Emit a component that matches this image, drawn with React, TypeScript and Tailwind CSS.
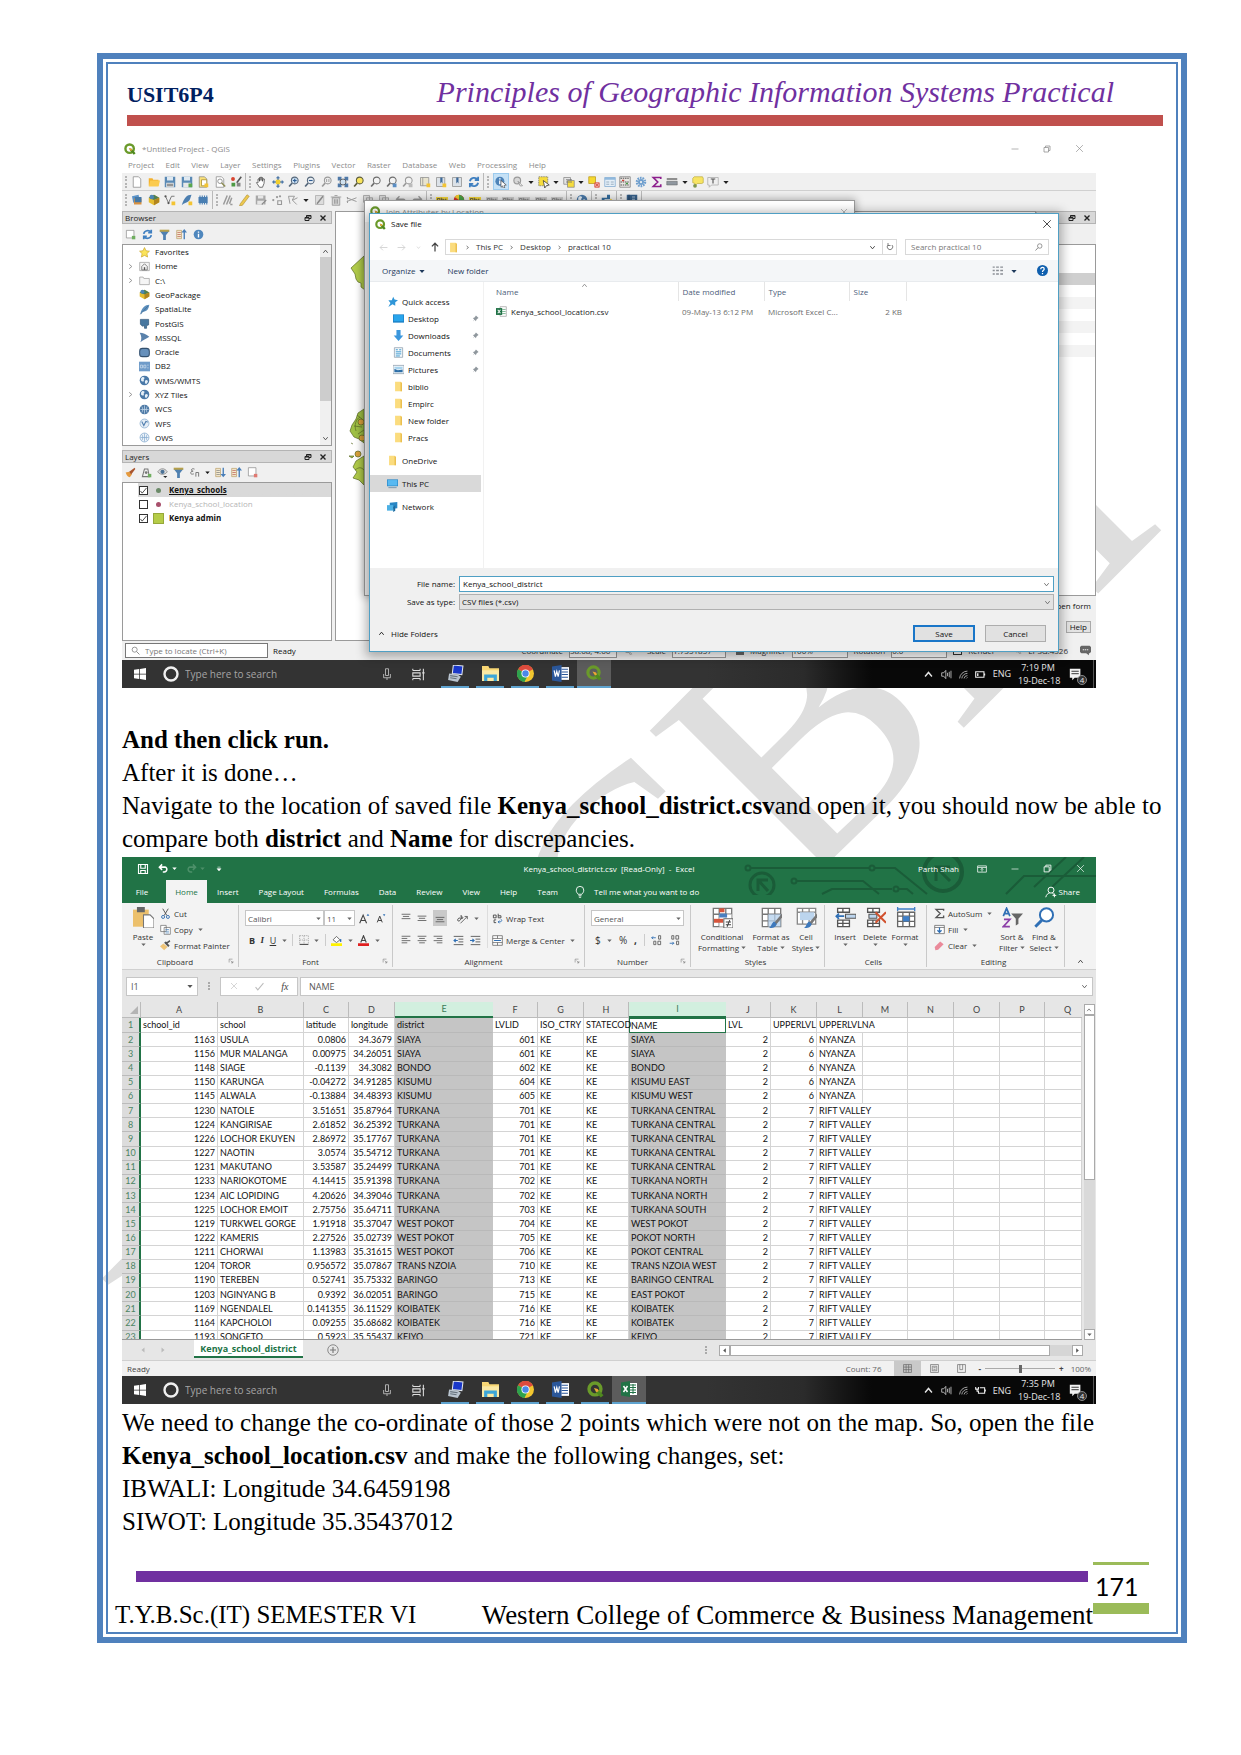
import React from "react";

/* ---------- icon set, all drawn on a 16 x 16 field ---------- */

const folder = (
  <>
    <path d="M3 1h8l2 2v12H3z" fill="#fbdc7e" />
    <path d="M11 1l2 2v12h-2z" fill="#e9bd4d" />
  </>
);
const lens = (stroke: string, fill: string) => (
  <>
    <circle cx="9" cy="6" r="4.5" fill={fill} stroke={stroke} strokeWidth="1.4" />
    <path d="M5.5 9.5L1.5 14" stroke={stroke} strokeWidth="2.2" />
  </>
);
const globe = (c: string) => (
  <>
    <circle cx="8" cy="8" r="7" fill={c} />
    <path d="M3 5c2-3 4-2 5-1s-2 2-1 4-3 2-4 0zM9 8c2-2 4 0 4 1s-2 4-3 4-2-3-1-5z" fill="#e6f0f8" />
  </>
);
const page = (c: string) => <path d="M3 1h7l3 3v11H3z" fill={c} stroke="#8a8a8a" />;
const dot = (x: number, y: number, c: string) => <rect x={x} y={y} width="5" height="5" fill={c} />;
const tbl = (accent: string) => (
  <>
    <path d="M1 1h14v14H1z" fill="#fff" stroke="#777" />
    <path d="M1 5.5h14M1 10.5h14M5.5 1v14M10.5 1v14" stroke="#777" />
    <path d="M5.5 5.5h9.5V15H5.5z" fill={accent} fillOpacity=".75" />
  </>
);
const lines = (rows: string, c = "#555") => <path d={rows} stroke={c} strokeWidth="1.3" fill="none" />;

const ICONS: Record<string, React.ReactNode> = {
  qgis: (
    <>
      <circle cx="7.5" cy="7.5" r="5.6" fill="none" stroke="#6a9a2a" strokeWidth="3.2" />
      <path d="M7 7l3 .5 5.5 6-2.5 2-5-5.5z" fill="#4f8a1e" />
      <path d="M6.5 6.5l3.5 1 1 2-2 1z" fill="#f0a33a" />
    </>
  ),
  new: page("#fff"),
  open: (
    <>
      <path d="M1 3h5l1 2h7v8H1z" fill="#f3b12e" />
      <path d="M3 6h13l-2 8H1z" fill="#fbcb4f" />
    </>
  ),
  save: (
    <>
      <path d="M1 1h14v14H1z" fill="#5b8ab5" />
      <path d="M4 1h8v5H4z" fill="#dfe9f1" />
      <path d="M3 9h10v6H3z" fill="#e8e8e8" />
      <path d="M4 11h8M4 13h8" stroke="#555" />
    </>
  ),
  saveas: (
    <>
      <path d="M1 1h14v14H1z" fill="#5b8ab5" />
      <path d="M4 1h8v5H4z" fill="#dfe9f1" />
      <path d="M3 9h10v6H3z" fill="#e8e8e8" />
      {dot(10, 10, "#5aa84e")}
    </>
  ),
  layout: (
    <>
      {page("#fbe27a")}
      <path d="M6 5h7v8H6z" fill="#fff" stroke="#a58a22" />
      {dot(10, 10, "#f3c433")}
    </>
  ),
  layoutmgr: (
    <>
      {page("#fff")}
      <circle cx="8" cy="7" r="3" fill="none" stroke="#777" />
      <path d="M10 9l5 5" stroke="#8d8d55" strokeWidth="2" />
    </>
  ),
  style: (
    <>
      <circle cx="4" cy="4" r="2.6" fill="#d8442f" />
      <path d="M2 9h5v5H2z" fill="#4e9a45" />
      <path d="M15 1L9 9" stroke="#555" strokeWidth="2" />
      <path d="M9 9h5v5H9z" fill="#888" />
    </>
  ),
  hand: (
    <path d="M4 9V4l1.500-.5L6 7V2l1.600-.4L8 6l.5-4.500L10 2v5l1-3.500 1.500.5L12 10l-2 5H6L2 9l1-1z" fill="#fff" stroke="#333" strokeWidth=".9" />
  ),
  panlayer: (
    <>
      <path d="M8 0l3 3H9v4h4V5l3 3-3 3V9H9v4h2l-3 3-3-3h2V9H3v2L0 8l3-3v2h4V3H5z" fill="#4f79a8" />
      <path d="M5 5h6v6H5z" fill="#f2cf2e" />
    </>
  ),
  zoomin: (
    <>
      {lens("#56687b", "#c9def0")}
      <path d="M9 3.500v5M6.500 6h5" stroke="#2d5c92" strokeWidth="1.5" />
    </>
  ),
  zoomout: (
    <>
      {lens("#56687b", "#e9eef3")}
      <path d="M6.500 6h5" stroke="#2d5c92" strokeWidth="1.5" />
    </>
  ),
  zoom11: (
    <>
      {lens("#9a9a9a", "#eee")}
      <path d="M7.500 4v4M10.500 4v4" stroke="#888" />
    </>
  ),
  zoomfull: (
    <>
      <path d="M1 1h5v5H1zM10 1h5v5h-5zM1 10h5v5H1zM10 10h5v5h-5z" fill="#4f79a8" />
      <circle cx="8" cy="8" r="4" fill="#cfe0ee" stroke="#444" />
    </>
  ),
  zoomsel: lens("#5d5d3d", "#f8e35c"),
  zoomlayer: lens("#6d6d6d", "#f3f3f3"),
  zoomlast: (
    <>
      {lens("#6d6d6d", "#f3f3f3")}
      {dot(9, 10, "#5b8ec4")}
    </>
  ),
  zoomnext: (
    <>
      {lens("#9a9a9a", "#f3f3f3")}
      {dot(9, 10, "#bbb")}
    </>
  ),
  mapview: (
    <>
      <path d="M2 2h11v11H2z" fill="#e8e4d0" stroke="#8d8d8d" />
      <path d="M5 2v11" stroke="#8d8d8d" />
      {dot(10, 10, "#f3c433")}
    </>
  ),
  bookmarknew: (
    <>
      <path d="M2 2h11v12H2z" fill="#dce2e8" stroke="#8d8d8d" />
      <path d="M7 2h3v8L8.500 8 7 10z" fill="#3e6a99" />
      {dot(10, 10, "#f3c433")}
    </>
  ),
  bookmark: (
    <>
      <path d="M2 2h12v12H2z" fill="#dce2e8" stroke="#8d8d8d" />
      <path d="M7 2h3v8L8.500 8 7 10z" fill="#3e6a99" />
    </>
  ),
  refresh: (
    <path d="M2.500 7A5.800 5.800 0 0 1 13 5M13.500 9A5.800 5.800 0 0 1 3 11M13.500 1v4.500H9M2.500 15v-4.500H7" fill="none" stroke="#3f7fc0" strokeWidth="2.4" />
  ),
  identify: (
    <>
      <circle cx="6.5" cy="7" r="6" fill="#4d83b8" />
      <path d="M6.500 3v1.500M6.500 6v5" stroke="#fff" strokeWidth="2" />
      <path d="M8 6l7 6-3 .5L13 16l-2 .2-1-3-2 1.800z" fill="#fff" stroke="#333" strokeWidth=".8" />
    </>
  ),
  gear: (
    <>
      <circle cx="7" cy="6" r="4.5" fill="#d7d7d7" stroke="#999" strokeWidth="1.5" />
      <path d="M8 7l6 6-3 .3z" fill="#fff" stroke="#888" />
    </>
  ),
  select: (
    <>
      <path d="M1 1h12v12H1z" fill="#f6dc3d" stroke="#777" strokeDasharray="2 1" />
      <path d="M7 6l8 6-4 1-2 3z" fill="#fff" stroke="#333" />
    </>
  ),
  selform: (
    <>
      <path d="M1 2h9v9H1z" fill="#e5e5e5" stroke="#888" />
      <path d="M6 6h9v9H6z" fill="#f6dc3d" stroke="#888" />
      <path d="M4 5h8M4 8h8" stroke="#666" />
    </>
  ),
  desel: (
    <>
      <path d="M1 1h9v9H1z" fill="#f6d92f" stroke="#b99a1c" />
      <path d="M9 9h6v6H9z" fill="#f0b0a8" stroke="#d6453b" />
      <path d="M10 10l4 4M14 10l-4 4" stroke="#d6453b" />
    </>
  ),
  attr: (
    <>
      <path d="M1 2h14v12H1z" fill="#e5eff8" stroke="#7fa8cf" />
      <path d="M1 2h14v3H1z" fill="#8fb8dd" />
      <path d="M3 8h4M9 8h4M3 11h4M9 11h4" stroke="#8199ad" />
    </>
  ),
  calc: (
    <>
      <path d="M1 1h14v14H1z" fill="#e8e6e2" stroke="#7b7b7b" />
      <path d="M2 3h12M2 8h12M2 12h12" stroke="#555" strokeDasharray="2 1" strokeWidth="1.5" />
      <path d="M4 5h3v2H4z" fill="#cc4038" />
      <path d="M9 9h3v2H9z" fill="#499a45" />
    </>
  ),
  cog: (
    <>
      <circle cx="8" cy="8" r="5.5" fill="none" stroke="#6f9fce" strokeWidth="3" strokeDasharray="2.2 1.2" />
      <circle cx="8" cy="8" r="4" fill="#6f9fce" />
      <circle cx="8" cy="8" r="1.5" fill="#f0f0f0" />
    </>
  ),
  sigma: <path d="M13 4V2H3l6 6-6 6h10v-3" fill="none" stroke="#8d1f8d" strokeWidth="2.2" />,
  measure: (
    <>
      <path d="M1 4h14" stroke="#444" strokeWidth="1.5" />
      <path d="M1 7h14v5H1z" fill="#8f979f" stroke="#555" strokeWidth=".6" />
    </>
  ),
  tip: (
    <>
      <path d="M3 1h11l1 2v6l-2 1H7l-3 3v-3L1 9V3z" fill="#f7e463" stroke="#b3a130" strokeWidth=".8" />
      <circle cx="4" cy="13" r="2.5" fill="#7d944d" />
    </>
  ),
  annot: (
    <>
      <path d="M1 2h14v10H6l-3 3v-3H1z" fill="#efefef" stroke="#aaa" />
      <path d="M5 4h6M8 4v6" stroke="#555" strokeWidth="1.5" />
    </>
  ),
  dsm: (
    <>
      <path d="M2 2h9v9H2z" fill="#5b93c9" transform="rotate(-12 6 6)" />
      <path d="M4 6h10v8H4z" fill="#d89142" />
      <path d="M5 4h9v7H5z" fill="#4478a6" />
    </>
  ),
  gpkg: (
    <>
      <path d="M8 1l7 4v6l-7 4-7-4V5z" fill="#e5bd31" />
      <path d="M8 1l7 4-7 3-7-3z" fill="#4e7f56" />
      <path d="M8 8v7l7-4V5z" fill="#b2861f" />
      <circle cx="5" cy="4" r="3" fill="#4d86b5" />
    </>
  ),
  shp: (
    <>
      <path d="M2 3l4 9L10 3h4" fill="none" stroke="#777" strokeWidth="1.3" />
      <circle cx="2" cy="3" r="1.5" fill="#555" />
      <circle cx="6" cy="12" r="1.5" fill="#555" />
      {dot(10, 10, "#f3c433")}
    </>
  ),
  feather: (
    <>
      <path d="M15 1C9 1 4 5 2 14l1 1c1-3 3-4 5-4 4-1 6-4 7-10z" fill="#5c8fbd" />
      <path d="M13 3L2 15" stroke="#32587c" strokeWidth=".8" />
    </>
  ),
  feathernew: (
    <>
      <path d="M14 1C8 1 4 5 1 15c4-4 9-3 11-8z" fill="#4d7fb0" />
      {dot(10, 10, "#f3c433")}
    </>
  ),
  mem: (
    <>
      <path d="M2 4h12v8H2z" fill="#4a7fb3" />
      <path d="M4 2v12M7 2v12M10 2v12M13 2v12" stroke="#4a7fb3" strokeWidth="1.5" />
    </>
  ),
  edits: <path d="M2 14L7 2M6 14L11 2M10 13l3-8M11 14h3" stroke="#9b9b9b" strokeWidth="2" />,
  pencil: <path d="M3 13L12 1l3 2-9 12-4 1z" fill="#edc84e" stroke="#a5842a" strokeWidth=".7" />,
  saveg: (
    <>
      <path d="M1 2h13v12H1z" fill="#a8a8a8" />
      <path d="M4 2h7v4H4zM3 9h9v5H3z" fill="#e6e6e6" />
      <path d="M9 14l6-6" stroke="#888" strokeWidth="1.5" />
    </>
  ),
  pts: (
    <>
      <circle cx="3" cy="8" r="1.5" fill="#999" />
      <circle cx="8" cy="4" r="1.5" fill="#999" />
      <circle cx="12" cy="3" r="1.5" fill="#999" />
      <path d="M9 9h5v5H9z" fill="none" stroke="#999" strokeWidth="1.5" />
    </>
  ),
  vertex: <path d="M2 3h8l-3 5 6 6M2 3l2 10M8 8l6-3" stroke="#9a9a9a" strokeWidth="1.3" fill="none" />,
  modify: (
    <>
      <path d="M2 2h11v12H2z" fill="#ddd" stroke="#aaa" />
      <path d="M4 13L12 3" stroke="#888" strokeWidth="2" />
    </>
  ),
  trash: (
    <>
      <path d="M3 5h10v10H3z" fill="#d5d5d5" stroke="#8f8f8f" />
      <path d="M1 4h14M6 2h4M6 7v6M8 7v6M10 7v6" stroke="#8f8f8f" />
    </>
  ),
  cutg: <path d="M1 5l13 5M1 10l13-5M2 4v3M2 9v3" stroke="#9a9a9a" strokeWidth="1.3" />,
  copyg: <path d="M2 2h8v9H2zM6 5h8v9H6z" fill="#ddd" stroke="#999" />,
  undog: <path d="M6 3L2 7l4 4M2 7h9c3 0 3 5 0 6" fill="none" stroke="#999" strokeWidth="1.8" />,
  redog: <path d="M10 3l4 4-4 4M14 7H5c-3 0-3 5 0 6" fill="none" stroke="#999" strokeWidth="1.8" />,
  abc: (
    <>
      <path d="M0 4h16v7H0z" fill="#f5d73a" />
      <path d="M2 6h3v3H2zM7 5v4h3V7H7M14 7h-2v2h2" fill="none" stroke="#444" />
    </>
  ),
  abcg: (
    <>
      <path d="M0 4h16v7H0z" fill="#ccc" />
      <path d="M2 6h3v3H2zM7 5v4h3V7H7M14 7h-2v2h2" fill="none" stroke="#777" />
    </>
  ),
  diagram: (
    <>
      <circle cx="8" cy="8" r="7" fill="#d7332b" />
      <path d="M8 8V1a7 7 0 0 1 6 10z" fill="#4aa347" />
      <path d="M8 8L2 4a7 7 0 0 1 6-3z" fill="#f2cf2e" />
    </>
  ),
  globe: globe("#4a79a8"),
  globel: (
    <>
      <circle cx="8" cy="8" r="6.5" fill="#eef4fa" stroke="#7fa6cc" />
      <path d="M2 8h12M8 2v12M4 3.500c2 3 2 6 0 9M12 3.500c-2 3-2 6 0 9" stroke="#7fa6cc" fill="none" />
    </>
  ),
  wfs: (
    <>
      <circle cx="8" cy="8" r="6.5" fill="#e4edf6" stroke="#7fa6cc" />
      <path d="M4 5l3 6 3-6 3 1" fill="none" stroke="#4f7eae" strokeWidth="1.5" />
    </>
  ),
  wcs: (
    <>
      <circle cx="8" cy="8" r="7" fill="#4d79a5" />
      <path d="M2 8h12M8 2v12M4 3.500c2 3 2 6 0 9M12 3.500c-2 3-2 6 0 9" stroke="#c9dced" fill="none" />
    </>
  ),
  python: (
    <>
      <path d="M8 1h4v6H5L3 10 1 8V5h7z" fill="#356d9e" />
      <path d="M8 15H4V9h7l2-3 2 2v3H8z" fill="#f3cf3c" />
    </>
  ),
  help: (
    <>
      <path d="M1 1h14v14H1z" fill="#365f88" />
      <path d="M4 1v14" stroke="#1b3a58" />
      <path d="M8 4h4M8 7h4" stroke="#c6d7e7" />
    </>
  ),
  addl: (
    <>
      <path d="M2 2h11v11H2z" fill="#fff" stroke="#888" />
      {dot(10, 10, "#6fae5f")}
    </>
  ),
  filter: (
    <>
      <path d="M1 3h14L10 9v7H6V9z" fill="#4f80b0" />
      <path d="M1 1h14v3H1z" fill="#b7a04a" />
    </>
  ),
  collapse: (
    <>
      <path d="M1 2h7v12H1z" fill="#f4ead0" stroke="#b99e65" />
      <path d="M2 5h5M2 8h5M2 11h5" stroke="#b9564a" />
      <path d="M11 15V5H8l4-5 4 5h-3v10z" fill="#4a7fb8" />
    </>
  ),
  expand: (
    <>
      <path d="M1 2h7v12H1z" fill="#f4ead0" stroke="#b99e65" />
      <path d="M2 5h5M2 8h5M2 11h5" stroke="#777" />
      <path d="M11 1v9H8l4 5 4-5h-3V1z" fill="#4a7fb8" />
    </>
  ),
  info: (
    <>
      <circle cx="8" cy="8" r="7" fill="#4f87bd" />
      <path d="M8 3.500v2M8 7v5.500" stroke="#fff" strokeWidth="2" />
    </>
  ),
  star: <path d="M8 .8l2.200 4.700 5 .6-3.700 3.500 1 5L8 12.200l-4.500 2.400 1-5L.8 6.100l5-.6z" fill="#fbe45b" stroke="#c9a42c" />,
  home: (
    <>
      <path d="M1 2h14v12H1z" fill="#f5f5f5" stroke="#999" />
      <path d="M4 8l4-4 4 4v5H4z" fill="none" stroke="#555" />
      <path d="M7 9h2v4H7z" fill="#555" />
    </>
  ),
  drive: <path d="M1 3h5l1 2h8v9H1z" fill="#f5f5f5" stroke="#999" />,
  postgis: <path d="M2 2h12v8l-3 1v4H8v-4L5 12 2 9z" fill="#47779f" stroke="#2f5678" />,
  mssql: <path d="M1 1c5 0 9 2 14 6-5 3-9 5-13 8 2-5 2-9-1-14z" fill="#5a82ab" />,
  oracle: <rect x="1" y="2" width="14" height="12" rx="4" fill="#6690bb" stroke="#33506e" strokeWidth="1.5" />,
  db2: (
    <>
      <path d="M0 1h16v14H0z" fill="#6f9bc9" />
      <path d="M2 6h3v4H2zM7 6h3v4H7zM12 6h2M12 10h2" stroke="#d5e4f2" fill="none" />
    </>
  ),
  brush: (
    <>
      <path d="M1 8l5-1 4 4-3 4C4 14 2 12 1 8z" fill="#e59a3e" />
      <path d="M6 7L14 1l1 2-6 8z" fill="#a9552e" />
    </>
  ),
  group: (
    <>
      <path d="M2 14L5 3h5l2 11z" fill="none" stroke="#777" strokeWidth="1.5" />
      <circle cx="7.5" cy="8" r="2" fill="#777" />
      {dot(10, 10, "#6fae5f")}
    </>
  ),
  eye: (
    <>
      <path d="M1 7c4-6 10-6 14 0-4 5-10 5-14 0z" fill="#ddd" stroke="#777" />
      <circle cx="8" cy="7" r="3" fill="#4b7297" />
      <path d="M9 13h6l-3 3z" fill="#222" />
    </>
  ),
  eps: <path d="M8 3C3 1 2 6 6 6c-5 0-5 6 1 4M10 8v6M10 8h4v6" fill="none" stroke="#777" strokeWidth="1.4" />,
  rem: (
    <>
      <path d="M2 1h11v12H2z" fill="#fff" stroke="#888" />
      {dot(10, 10, "#e07a72")}
    </>
  ),
  quick: <path d="M9 1l2 4 5 1-4 3v5l-4-2-6 4 3-6-3-4h5z" fill="#2f96d8" />,
  desktop: (
    <>
      <path d="M0 2h16v12H0z" fill="#1b7fc4" />
      <path d="M1 3h14v9H1z" fill="#29a5ec" />
    </>
  ),
  down: <path d="M5 0h6v8h4l-7 8-7-8h4z" fill="#3b97dd" />,
  docs: (
    <>
      <path d="M2 1h12v14H2z" fill="#f4f8fb" stroke="#8295a5" />
      <path d="M4 4h3M4 7h8M4 10h8M9 4h3M4 13h6" stroke="#3c9ad0" strokeWidth="1.4" />
    </>
  ),
  pics: (
    <>
      <path d="M0 2h16v12H0z" fill="#f4f8fb" stroke="#8295a5" />
      <path d="M2 12V7l5 2 7-1v4z" fill="#2d6fa8" />
      <path d="M2 4h12v3L7 8 2 6z" fill="#a7d3ee" />
    </>
  ),
  folder,
  pc: (
    <>
      <path d="M0 2h16v10H0z" fill="#2b88c9" />
      <path d="M1 3h14v8H1z" fill="#58b9f1" />
      <path d="M2 14h12" stroke="#7f9cb1" strokeWidth="1.5" />
    </>
  ),
  network: (
    <>
      <path d="M4 1h11v9H4z" fill="#2786c4" transform="skewY(-6) translate(0 2)" />
      <path d="M0 6h9v8H0z" fill="#4cb0e4" />
      <path d="M9 9l3-3v8l-3 2z" fill="#1c6a9f" />
    </>
  ),
  pin: <path d="M9 1l6 6-2 1-3 3-1 3-3-3-4 4 3-5-3-3 3-1 3-3z" fill="#8f979d" />,
  csv: (
    <>
      <path d="M6 1h9v14H6z" fill="#fff" stroke="#9a9a9a" />
      <path d="M9 5h5M9 8h5M9 11h5" stroke="#4c9b6c" />
      <path d="M0 3h9v10H0z" fill="#1f7145" />
      <path d="M2.500 5.500l4 5M6.500 5.500l-4 5" stroke="#fff" strokeWidth="1.5" />
    </>
  ),
  search: (
    <>
      <circle cx="9.5" cy="6" r="4.5" fill="none" stroke="#666" strokeWidth="1.3" />
      <path d="M6 9.500L1 15" stroke="#666" strokeWidth="1.5" />
    </>
  ),
  locate: (
    <>
      <circle cx="6.5" cy="6.5" r="4.5" fill="none" stroke="#777" strokeWidth="1.3" />
      <path d="M10 10l5 5" stroke="#777" strokeWidth="1.5" />
    </>
  ),
  reload: <path d="M4 4a5.500 5.500 0 1 0 8 0M4 0v5h5" fill="none" stroke="#555" strokeWidth="1.5" />,
  x: <path d="M2 2l12 12M14 2L2 14" stroke="currentColor" strokeWidth="1.2" />,
  xb: <path d="M3 3l10 10M13 3L3 13" stroke="currentColor" strokeWidth="2.8" />,
  min: <path d="M1 8h14" stroke="currentColor" strokeWidth="1.3" />,
  rest: <path d="M2 5h9v9H2zM5 5V2h9v9h-3" fill="none" stroke="currentColor" strokeWidth="1.5" />,
  float: <path d="M2 7h8v6H2zM5 7V3h9v6h-4M2 8h8M5 4h9" fill="none" stroke="currentColor" strokeWidth="2" />,
  up: <path d="M3 11l5-6 5 6" fill="none" stroke="currentColor" strokeWidth="2" />,
  dn: <path d="M3 5l5 6 5-6" fill="none" stroke="currentColor" strokeWidth="2" />,
  rt: <path d="M5 3l6 5-6 5" fill="none" stroke="currentColor" strokeWidth="2" />,
  caret: <path d="M1 5h14l-7 8z" fill="currentColor" />,
  more: <path d="M4 3h8M3 7h10l-5 6z" fill="currentColor" stroke="currentColor" strokeWidth="1.5" />,
  left: <path d="M15 8H2M7 3L2 8l5 5" fill="none" stroke="currentColor" strokeWidth="1.4" />,
  right: <path d="M1 8h13M9 3l5 5-5 5" fill="none" stroke="currentColor" strokeWidth="1.4" />,
  upa: <path d="M8 15V2M3 7l5-5 5 5" fill="none" stroke="#444" strokeWidth="2" />,
  views: <path d="M1 3h3M6 3h4M12 3h4M1 8h3M6 8h4M12 8h4M1 13h3M6 13h4M12 13h4" stroke="#8a8f95" strokeWidth="2" />,
  qmark: (
    <>
      <circle cx="8" cy="8" r="8" fill="#0f5fae" />
      <path d="M5.500 6c0-3.500 5-3 5-.3C10.500 8 8 7.500 8 10M8 11.500v2" fill="none" stroke="#fff" strokeWidth="1.8" />
    </>
  ),
  chat: (
    <>
      <path d="M2 1h12l2 2v7l-2 2h-1v3l-4-3H2l-2-2V3z" fill="#666" />
      <path d="M4 7h2M7 7h2M10 7h2" stroke="#eee" strokeWidth="1.5" />
    </>
  ),
  /* task bar */
  win: <path d="M0 2.300l7-1V7.600H0zM8 1.200L16 0v7.600H8zM0 8.500h7v6.300l-7-1zM8 8.500h8V16l-8-1.200z" fill="#fff" />,
  cortana: <circle cx="8" cy="8" r="6.5" fill="none" stroke="#f0f0f0" strokeWidth="2.4" />,
  mic: (
    <>
      <path d="M6 1h4v9H6z" fill="none" stroke="#bbb" strokeWidth="1.2" />
      <path d="M3.500 8v5h9V8M8 13v3" fill="none" stroke="#bbb" strokeWidth="1.2" />
    </>
  ),
  tview: <path d="M1 3h9M1 13h9M1 6h9v4H1zM1 1v2M1 13v2M10 1v2M10 13v2M14 1v14M12.500 6h3" fill="none" stroke="#ddd" strokeWidth="1.3" />,
  server: (
    <>
      <path d="M6 0l9 1-1 8-9-1z" fill="#1937c9" stroke="#dfe5ee" />
      <path d="M2 8l8 1 3 2-3 5-9-2z" fill="#b9c4cf" />
      <path d="M3 10l7 1M3 12l6 1" stroke="#66727d" />
    </>
  ),
  explorer: (
    <>
      <path d="M0 1h6l1 2h9v12H0z" fill="#f8d775" />
      <path d="M0 5h16v10H0z" fill="#fbe9a4" />
      <path d="M2 9h12v6h-3v-3H5v3H2z" fill="#3da6d8" />
    </>
  ),
  chrome: (
    <>
      <circle cx="8" cy="8" r="8" fill="#f2c62f" />
      <path d="M8 8L1 4a8 8 0 0 1 14 0z" fill="#dd4b3e" />
      <path d="M8 8L1 4a8 8 0 0 0 6 12l3-6z" fill="#2da24e" />
      <circle cx="8" cy="8" r="3.8" fill="#fff" />
      <circle cx="8" cy="8" r="3" fill="#4a87e8" />
    </>
  ),
  word: (
    <>
      <path d="M8 2h8v12H8z" fill="#fff" />
      <path d="M9 4h6M9 6.500h6M9 9h6M9 11.500h6" stroke="#2b579a" />
      <path d="M0 1.500L9 0v16l-9-1.500z" fill="#2b579a" />
      <path d="M2 5l1.200 6L4.500 6l1.300 5L7 5" fill="none" stroke="#fff" strokeWidth="1.1" />
    </>
  ),
  excel: (
    <>
      <path d="M8 2h8v12H8z" fill="#fff" />
      <path d="M9 4h6M9 6.500h6M9 9h6M9 11.500h6M12 3v10" stroke="#217346" />
      <path d="M0 1.500L9 0v16l-9-1.500z" fill="#217346" />
      <path d="M2.500 5l4 6M6.500 5l-4 6" stroke="#fff" strokeWidth="1.5" />
    </>
  ),
  sound: <path d="M1 5.500h3L7 2v12l-3-3.500H1zM9.500 5.500v5M12 4v8M14.500 2.500v11" fill="none" stroke="#ccc" strokeWidth="1.2" />,
  wifi: <path d="M1 15A14 14 0 0 1 15 2M5 15a10 10 0 0 1 10-9M9 15a6 6 0 0 1 6-5M13 15l2-2" fill="none" stroke="#bbb" strokeWidth="1.5" />,
  batt: (
    <>
      <path d="M1 4h12v8H1zM14 6.500v3" fill="none" stroke="#eee" strokeWidth="1.6" />
      <path d="M3 6h2v4H3z" fill="#eee" />
    </>
  ),
  plug: <path d="M7 4h7v8H5V8M15 6.500v3M1 3v3h4V3M3 6v3h2" fill="none" stroke="#eee" strokeWidth="1.6" />,
  notif: (
    <>
      <path d="M1 1h13v11H7l-3 3v-3H1z" fill="#f2f2f2" />
      <path d="M3 4h9M3 7h9" stroke="#333" strokeWidth="1.2" />
    </>
  ),
  /* spreadsheet */
  xsave: <path d="M2 2h12v12H2zM5 2v5h6V2M5 14v-4h6v4" fill="none" stroke="#fff" strokeWidth="1.5" />,
  xundo: <path d="M6 2L2 6l4 4M2 6h8c4 0 4 7-1 7H7" fill="none" stroke="currentColor" strokeWidth="2.2" />,
  xredo: <path d="M10 2l4 4-4 4M14 6H6c-4 0-4 7 1 7h2" fill="none" stroke="currentColor" strokeWidth="2.2" />,
  ribbon: <path d="M1 3h14v10H1zM1 5.500h14M8 12V7M6 9l2-2 2 2" fill="none" stroke="#fff" strokeWidth="1.2" />,
  bulb: <path d="M5.500 11C4 9 3 8 3 5.500a5 5 0 0 1 10 0C13 8 12 9 10.500 11zM6 13h4M6.500 15h3" fill="none" stroke="#fff" strokeWidth="1.2" />,
  person: (
    <>
      <circle cx="8" cy="5.5" r="4" fill="none" stroke="#fff" strokeWidth="1.3" />
      <path d="M1 15c1-4 3-5 5-5.500M10 10l2 1M12.500 10v5M10 12.500h5" fill="none" stroke="#fff" strokeWidth="1.3" />
    </>
  ),
  paste: (
    <>
      <path d="M0 2h12v13H0z" fill="#ecc06c" />
      <path d="M3 0h6v4H3z" fill="#666" />
      <path d="M8 6h5l3 3v7H8z" fill="#fff" stroke="#777" strokeWidth=".8" />
    </>
  ),
  scissors: (
    <>
      <path d="M4 1l6 10M12 1L6 11" stroke="#555" strokeWidth="1.4" />
      <circle cx="4.5" cy="13" r="2.2" fill="none" stroke="#3a74b4" strokeWidth="1.4" />
      <circle cx="11.5" cy="13" r="2.2" fill="none" stroke="#3a74b4" strokeWidth="1.4" />
    </>
  ),
  copy: (
    <>
      <path d="M1 2h8v9H1zM6 5h9v10H6z" fill="#fff" stroke="#666" />
      <path d="M8 8h5M8 10.500h5M8 13h5" stroke="#4a81b9" />
    </>
  ),
  painter: (
    <>
      <path d="M0 9l5-4 6 5-5 5z" fill="#efc477" />
      <path d="M6 4l6 6 2-2-3-3 4-3-1-2-4 3-2-1z" fill="#555" />
    </>
  ),
  growA: (
    <>
      <path d="M1 15L6 3l5 12M3 11h6" fill="none" stroke="#444" strokeWidth="1.6" />
      <path d="M11 4l2-3 2 3z" fill="#2f6fb5" />
    </>
  ),
  shrinkA: (
    <>
      <path d="M2 15L6 5l4 10M3.500 12h5" fill="none" stroke="#444" strokeWidth="1.6" />
      <path d="M11 2h4l-2 3z" fill="#2f6fb5" />
    </>
  ),
  border: (
    <>
      <path d="M1 1h14M1 8h14M1 1v14M8 1v14M15 1v14" stroke="#888" strokeDasharray="2 1.5" />
      <path d="M1 15h14" stroke="#333" strokeWidth="1.5" />
    </>
  ),
  fill: (
    <>
      <path d="M3 7l5-5 5 5-5 4z" fill="#fff" stroke="#555" strokeWidth="1.2" />
      <path d="M14 6v4" stroke="#2f6fb5" strokeWidth="2" />
      <path d="M0 12h16v4H0z" fill="#fff200" />
    </>
  ),
  fontc: (
    <>
      <path d="M4 11L8 1l4 10M5.500 8h5" fill="none" stroke="#444" strokeWidth="1.6" />
      <path d="M0 12h16v4H0z" fill="#e02020" />
    </>
  ),
  atop: lines("M1 2h14M3 5.500h10M1 9h14"),
  amid: lines("M1 5h14M3 8.500h10M1 12h14"),
  abot: lines("M1 7h14M3 10.500h10M1 14h14"),
  aleft: lines("M1 2h14M1 5.500h9M1 9h14M1 12.500h9"),
  acen: lines("M1 2h14M3.500 5.500h9M1 9h14M3.500 12.500h9"),
  aright: lines("M1 2h14M6 5.500h9M1 9h14M6 12.500h9"),
  orient: (
    <>
      <path d="M2 8c2-2 5 1 2 3s-4-1-2-3zM6 3v5c3 1 4-3 0-2" fill="none" stroke="#444" strokeWidth="1.4" />
      <path d="M5 15L15 5M11 5h4v4" fill="none" stroke="#666" strokeWidth="1.4" />
    </>
  ),
  outdent: (
    <>
      {lines("M1 2h14M8 6h7M8 10h7M1 14h14")}
      <path d="M7 8H2M4 5.500L1.500 8 4 10.500" stroke="#2f6fb5" strokeWidth="1.6" fill="none" />
    </>
  ),
  indent: (
    <>
      {lines("M1 2h14M8 6h7M8 10h7M1 14h14")}
      <path d="M0 8h6M3.500 5.500L6 8l-2.500 2.500" stroke="#2f6fb5" strokeWidth="1.6" fill="none" />
    </>
  ),
  wrap: (
    <>
      <path d="M2 3h4v4H2zM9 1v6h4V4H9M6 10H3v4h3" fill="none" stroke="#444" strokeWidth="1.3" />
      <path d="M13 9c3 3 0 4-4 4M11 11l-2 2 2 2" fill="none" stroke="#2f6fb5" strokeWidth="1.3" />
    </>
  ),
  merge: (
    <>
      <path d="M1 1h14v14H1zM1 5h14M1 11h14M8 1v4M8 11v4" fill="#fff" stroke="#555" />
      <path d="M3 8h10" stroke="#2f6fb5" strokeWidth="1.5" />
    </>
  ),
  inc: (
    <>
      <path d="M1 4h6M3 2L1 4l2 2" fill="none" stroke="#2f6fb5" strokeWidth="1.3" />
      <path d="M11 1h3v5h-3zM4 9h3v5H4zM10 9h4v5h-4z" fill="none" stroke="#555" strokeWidth="1.2" />
    </>
  ),
  dec: (
    <>
      <path d="M1 12h6M5 10l2 2-2 2" fill="none" stroke="#2f6fb5" strokeWidth="1.3" />
      <path d="M4 1h3v5H4zM10 1h4v5h-4zM11 9h3v5h-3z" fill="none" stroke="#555" strokeWidth="1.2" />
    </>
  ),
  cond: (
    <>
      {tbl("#fff")}
      <path d="M5.500 1h4v3h-4z" fill="#d6553c" />
      <path d="M5.500 5h6v3h-6z" fill="#4a7fc0" />
      <path d="M1.500 9h7v3h-7z" fill="#d6553c" />
      <path d="M9 9h7v7H9z" fill="#fff" stroke="#666" strokeWidth=".8" />
      <path d="M10.500 11.500h4M10.500 13.500h4M13.500 10l-2 5" stroke="#444" strokeWidth=".8" />
    </>
  ),
  fmt: (
    <>
      {tbl("#b4d0ec")}
      <path d="M16 5l-6 7 1.500 1.500L16 8z" fill="#777" />
      <path d="M10 11l2 2c-1 3-3 3-6 3 2-1 2-4 4-5z" fill="#3e79bc" />
    </>
  ),
  cellst: (
    <>
      <path d="M1 1h14v12H1zM1 4h14M5 1v12M10 1v12" fill="#fff" stroke="#888" />
      <path d="M3 4h11v6H3z" fill="#bcd5ee" />
      <path d="M16 5l-6 7 1.500 1.500L16 8z" fill="#777" />
      <path d="M10 11l2 2c-1 3-3 3-6 3 2-1 2-4 4-5z" fill="#3e79bc" />
    </>
  ),
  ins: (
    <>
      <path d="M2 1h9v3H2zM6 1v3M2 10h9v5H2zM6 10v5M2 12.500h9" fill="#fff" stroke="#555" />
      <path d="M8 5.500h8v3H8z" fill="#bcd5ee" stroke="#555" strokeWidth=".8" />
      <path d="M7 7H1M3 5L1 7l2 2" fill="none" stroke="#2f6fb5" strokeWidth="1.3" />
    </>
  ),
  del: (
    <>
      <path d="M2 1h9v3H2zM6 1v3M2 10h9v5H2zM6 10v5M2 12.500h9" fill="#fff" stroke="#555" />
      <path d="M3 5.500h6v3H3z" fill="#bcd5ee" stroke="#555" strokeWidth=".8" />
      <path d="M8 4l8 8M16 4l-8 8" stroke="#d1512e" strokeWidth="1.5" />
    </>
  ),
  form: (
    <>
      <path d="M2 4h13v11H2zM2 7h13M2 11h13M6 4v11M11 4v11" fill="#fff" stroke="#666" />
      <path d="M6 7h5v4H6z" fill="#3f7fc7" />
      <path d="M2 1.500h13M2 0v3M15 0v3" stroke="#3f7fc7" />
    </>
  ),
  sum: <path d="M14 4V2H3l6 6-6 6h11v-3" fill="none" stroke="#555" strokeWidth="2" />,
  filld: (
    <>
      <path d="M1 2h14v12H1zM1 5h14" fill="#fff" stroke="#555" />
      <path d="M8 5v7M5 9l3 3 3-3" fill="none" stroke="#2f6fb5" strokeWidth="1.8" />
    </>
  ),
  eraser: <path d="M1 10L9 2l5 4-8 8-4 1z" fill="#ea8a9a" />,
  sort: (
    <>
      <path d="M1 7l2.500-6L6 7M2 5h3" fill="none" stroke="#2f6fb5" strokeWidth="1.3" />
      <path d="M1.500 9.500H6l-5 5.500h5" fill="none" stroke="#8c3fa8" strokeWidth="1.3" />
      <path d="M7 5h9l-3.500 4v4l-2 1V9z" fill="#666" />
    </>
  ),
  find: (
    <>
      <circle cx="9.5" cy="6" r="5" fill="#fff" stroke="#2f6fb5" strokeWidth="1.5" />
      <path d="M6 10l-5 5" stroke="#2f6fb5" strokeWidth="2.2" />
    </>
  ),
  launch: <path d="M3 12V3h9M7 7l6 6M13 8v5H8" fill="none" stroke="#777" strokeWidth="1.5" />,
  check: <path d="M1 9l4 5L15 2" fill="none" stroke="currentColor" strokeWidth="1.8" />,
  plusc: (
    <>
      <circle cx="8" cy="8" r="7" fill="none" stroke="#777" strokeWidth="1.1" />
      <path d="M8 4v8M4 8h8" stroke="#777" strokeWidth="1.5" />
    </>
  ),
  vnormal: <path d="M1 1h14v14H1zM1 5.500h14M1 10h14M5.500 1v14M10 1v14" fill="none" stroke="#666" strokeWidth="1.2" />,
  vpage: <path d="M1 1h14v14H1zM4 4h8v8H4zM6 6.500h4M6 9.500h4" fill="none" stroke="#666" strokeWidth="1.2" />,
  vbreak: <path d="M1 1h14v14H1zM5 1v9h5V1" fill="none" stroke="#666" strokeWidth="1.2" />,
  tl: <path d="M11 3L5 8l6 5z" fill="currentColor" />,
  tr: <path d="M5 3l6 5-6 5z" fill="currentColor" />,
};

function Ico({ n, c = "size-3" }: { n: string; c?: string }) {
  return (
    <svg viewBox="0 0 16 16" className={`flex-none ${c}`} aria-hidden="true">
      {ICONS[n]}
    </svg>
  );
}

function IconButton({ n, label, c, className = "" }: { n: string; label: string; c?: string; className?: string }) {
  return (
    <button type="button" aria-label={label} className={`flex flex-none items-center justify-center ${className}`}>
      <Ico n={n} c={c} />
    </button>
  );
}

/* ---------- QGIS ---------- */

function ToolGroup({ names, className }: { names: string[]; className: string }) {
  return (
    <div className={`flex flex-none items-center justify-between border-r border-[#b9b9b9] px-[3px] ${className}`}>
      <span className="h-3 w-0 border-l-2 border-dotted border-[#b5b5b5]" />
      {names.map((n, i) =>
        n === "v" ? (
          <IconButton key={i} n="caret" label="More options" c="size-[6px]" className="text-[#222]" />
        ) : (
          <IconButton
            key={i}
            n={n}
            label={n}
            c="size-3"
            className={n === "identify" ? "h-[17px] w-4 border border-[#9ccbee] bg-[#c5e1f6]" : ""}
          />
        )
      )}
    </div>
  );
}

function PanelHeader({ title }: { title: string }) {
  return (
    <div className="flex h-[13px] flex-none items-center gap-[7px] border border-[#b4b4b4] bg-[#d8d8d8] pr-1 pl-[2px] text-[#222]">
      <span className="mr-auto">{title}</span>
      <IconButton n="float" label={`Float ${title}`} c="size-2" />
      <IconButton n="xb" label={`Close ${title}`} c="size-2" />
    </div>
  );
}

const BROWSER: [string, string, boolean][] = [
  ["star", "Favorites", false],
  ["home", "Home", true],
  ["drive", "C:\\", true],
  ["gpkg", "GeoPackage", false],
  ["feather", "SpatiaLite", false],
  ["postgis", "PostGIS", false],
  ["mssql", "MSSQL", false],
  ["oracle", "Oracle", false],
  ["db2", "DB2", false],
  ["globe", "WMS/WMTS", false],
  ["globe", "XYZ Tiles", true],
  ["wcs", "WCS", false],
  ["wfs", "WFS", false],
  ["globel", "OWS", false],
];

function BrowserPanel() {
  return (
    <section className="flex flex-none flex-col">
      <PanelHeader title="Browser" />
      <div className="flex h-[20px] items-center gap-[6px] pl-[3px]">
        <IconButton n="addl" label="Add layer" c="size-[11px]" />
        <IconButton n="refresh" label="Refresh" c="size-[11px]" />
        <IconButton n="filter" label="Filter" c="size-[11px]" />
        <IconButton n="collapse" label="Collapse all" c="size-[11px]" />
        <IconButton n="info" label="Properties" c="size-[11px]" />
      </div>
      <div className="flex h-[202px] border border-[#9a9a9a] bg-white">
        <ul className="flex flex-1 flex-col justify-around">
          {BROWSER.map(([icon, name, open]) => (
            <li key={name} className="flex h-[14px] items-center">
              <span className="flex w-[16px] pl-1">{open && <Ico n="rt" c="size-[7px] text-[#888]" />}</span>
              <Ico n={icon} c="size-[11px]" />
              <span className="pl-[5px]">{name}</span>
            </li>
          ))}
        </ul>
        <div className="flex w-[11px] flex-none flex-col items-center bg-[#f0f0f0] py-[3px] text-[#444]">
          <Ico n="up" c="size-[7px]" />
          <span className="mt-[2px] h-[144px] w-full bg-[#cdcdcd]" />
          <Ico n="dn" c="mt-auto size-[7px]" />
        </div>
      </div>
    </section>
  );
}

function LayerRow({ id, name, on, className, children }: { id: string; name: string; on: boolean; className: string; children: React.ReactNode }) {
  return (
    <div className="flex h-[14px] items-center pl-4">
      <input
        id={id}
        type="checkbox"
        defaultChecked={on}
        className="peer size-[9px] flex-none appearance-none border border-[#333] bg-white"
      />
      <svg viewBox="0 0 16 16" className="invisible -ml-2 size-[7px] flex-none text-[#222] peer-checked:visible">
        {ICONS.check}
      </svg>
      <span className="flex w-[22px] flex-none justify-center">{children}</span>
      <label htmlFor={id} className={className}>
        {name}
      </label>
    </div>
  );
}

function LayersPanel() {
  return (
    <section className="mt-1 flex flex-1 flex-col">
      <PanelHeader title="Layers" />
      <div className="flex h-[19px] items-center gap-[5px] pl-[3px]">
        <IconButton n="brush" label="Styling" c="size-[11px]" />
        <IconButton n="group" label="Add group" c="size-[11px]" />
        <IconButton n="eye" label="Map themes" c="size-[11px]" />
        <IconButton n="filter" label="Filter legend" c="size-[11px]" />
        <IconButton n="eps" label="Filter by expression" c="size-[11px]" />
        <IconButton n="caret" label="More" c="size-[5px]" />
        <IconButton n="expand" label="Expand all" c="size-[11px]" />
        <IconButton n="collapse" label="Collapse all" c="size-[11px]" />
        <IconButton n="rem" label="Remove layer" c="size-[11px]" />
      </div>
      <ul className="flex-1 border border-[#9a9a9a] bg-white">
        <li className="bg-gradient-to-r from-white from-7% to-[#d9d9d9] to-7%">
          <LayerRow id="l1" name="Kenya_schools" on className="font-bold underline">
            <span className="size-[5px] rounded-full bg-[#6b8a68]" />
          </LayerRow>
        </li>
        <li>
          <LayerRow id="l2" name="Kenya_school_location" on={false} className="text-[#b5b5b5]">
            <span className="size-[5px] rounded-full bg-[#a8506c]" />
          </LayerRow>
        </li>
        <li>
          <LayerRow id="l3" name="Kenya admin" on className="font-bold">
            <span className="size-[11px] border border-[#96a83a] bg-[#b5cc48]" />
          </LayerRow>
        </li>
      </ul>
    </section>
  );
}

function MapCanvas() {
  return (
    <svg viewBox="0 0 40 431" className="h-[431px] w-[40px] flex-none" aria-label="Map canvas">
      <g stroke="#5c6b25" strokeWidth=".7">
        <path d="M28 44L15 56l4 6 1 5 2 3 3 1v4l4 3z" fill="#b1cb4b" />
        <path d="M28 197l-6 4-2 6-4 6-2 6 4 6 5 2 5 4z" fill="#9fc044" />
        <path d="M24 205c-4 2-6 8-4 14M18 214l8 1M28 218l-6 4M21 203l5 4" fill="none" />
        <circle cx="25" cy="210" r="3" fill="#dba23b" />
        <circle cx="26" cy="226" r="3" fill="#dba23b" />
        <circle cx="22" cy="242" r="3" fill="#dba23b" />
        <path d="M13 244l3 2 2-2zM15 231l2 1" fill="#9fc044" />
        <path d="M28 244l-8 5-3 6 4 5-4 6 6 2 5 5z" fill="#b1cb4b" />
        <path d="M19 258c4-3 6-3 9 0" fill="none" />
      </g>
    </svg>
  );
}

function ResultPanel() {
  return (
    <section className="flex w-[60px] flex-none flex-col">
      <PanelHeader title="" />
      <div className="mt-5 h-[352px] border border-[#9a9a9a] bg-white pt-7">
        <div className="h-3 bg-[#cfcfcf]" />
        <div className="mt-3 h-3 bg-[#f3f3f3]" />
        <div className="mt-3 h-3 bg-[#f3f3f3]" />
        <div className="mt-3 h-3 bg-[#f3f3f3]" />
      </div>
      <div className="mt-1 flex flex-1 flex-col items-end justify-between pr-[5px] pb-2">
        <span className="whitespace-nowrap">Auto open form</span>
        <button type="button" className="border border-[#aaa] bg-[#e3e3e3] px-[3px] leading-[10px]">
          Help
        </button>
      </div>
    </section>
  );
}

function Tree({ icon, name, pinned, deep }: { icon: string; name: string; pinned?: boolean; deep?: boolean }) {
  return (
    <div className={`flex h-[17px] items-center gap-1 pr-1 ${deep ? "pl-[23px]" : "pl-[17px]"}`}>
      <Ico n={icon} c="size-[11px]" />
      <span className="mr-auto whitespace-nowrap">{name}</span>
      {pinned && <Ico n="pin" c="size-[7px]" />}
    </div>
  );
}

const FOLDERS: [string, string, boolean][] = [
  ["desktop", "Desktop", true],
  ["down", "Downloads", true],
  ["docs", "Documents", true],
  ["pics", "Pictures", true],
  ["folder", "biblio", false],
  ["folder", "Empirc", false],
  ["folder", "New folder", false],
  ["folder", "Pracs", false],
];

function SaveDialog() {
  return (
    <div
      role="dialog"
      aria-label="Save file"
      className="absolute top-[73px] right-[37px] left-[247px] flex h-[439px] flex-col border border-[#4f9fc4] bg-white shadow-[0_2px_10px_3px_rgba(0,0,0,0.3)]"
    >
      <div className="flex h-[20px] items-center gap-[5px] pr-[6px] pl-[5px]">
        <Ico n="qgis" c="size-[11px]" />
        <span className="mr-auto">Save file</span>
        <IconButton n="x" label="Close" c="size-[10px]" />
      </div>
      <div className="mt-[5px] flex h-4 items-center pr-[9px] text-[#ccc]">
        <div className="flex w-[75px] flex-none items-center justify-between pr-[5px] pl-[9px]">
          <IconButton n="left" label="Back" c="size-[9px]" />
          <IconButton n="right" label="Forward" c="size-[9px]" />
          <IconButton n="dn" label="Recent" c="size-[5px]" />
          <IconButton n="upa" label="Up" c="size-[10px]" />
        </div>
        <div className="flex h-4 flex-1 items-center gap-[6px] border border-[#d9d9d9] pl-[2px] text-[#333]">
          <Ico n="folder" c="size-[11px]" />
          <Ico n="rt" c="size-[5px]" />
          <span>This PC</span>
          <Ico n="rt" c="size-[5px]" />
          <span>Desktop</span>
          <Ico n="rt" c="size-[5px]" />
          <span className="mr-auto">practical 10</span>
          <Ico n="dn" c="size-[7px]" />
          <span className="flex h-full w-[14px] items-center justify-center border-l border-[#d9d9d9]">
            <Ico n="reload" c="size-2" />
          </span>
        </div>
        <div className="ml-2 flex h-4 w-[144px] flex-none items-center border border-[#d9d9d9] px-[5px]">
          <input aria-label="Search" placeholder="Search practical 10" className="min-w-0 flex-1 placeholder:text-[#777]" />
          <Ico n="search" c="size-2" />
        </div>
      </div>
      <div className="mt-[5px] flex h-[22px] items-center border-b border-[#e8ebee] bg-[#f4f6f8] pr-[10px] pl-3 text-[#1e395b]">
        <button type="button" className="flex items-center gap-1">
          Organize <Ico n="caret" c="size-[6px]" />
        </button>
        <button type="button" className="mr-auto ml-[22px]">
          New folder
        </button>
        <IconButton n="views" label="Views" c="size-[11px]" />
        <IconButton n="caret" label="View options" c="size-[6px]" className="ml-2" />
        <IconButton n="qmark" label="Help" c="size-[11px]" className="ml-5" />
      </div>
      <div className="flex h-[286px]">
        <ul className="w-[114px] flex-none border-r border-[#f1f1f1] pt-[11px]">
          <li>
            <Tree icon="quick" name="Quick access" />
          </li>
          {FOLDERS.map(([icon, name, pinned]) => (
            <li key={name}>
              <Tree icon={icon} name={name} pinned={pinned} deep />
            </li>
          ))}
          <li className="mt-[6px]">
            <Tree icon="folder" name="OneDrive" />
          </li>
          <li className="mt-[6px] mr-[2px] bg-[#d9d9d9]">
            <Tree icon="pc" name="This PC" />
          </li>
          <li className="mt-[6px]">
            <Tree icon="network" name="Network" />
          </li>
        </ul>
        <div className="relative min-w-0 flex-1">
          <Ico n="up" c="absolute top-0 left-[97px] size-[7px] text-[#888]" />
          <table className="w-full table-fixed text-left">
            <colgroup>
              <col className="w-[194px]" />
              <col className="w-[86px]" />
              <col className="w-[85px]" />
              <col className="w-[57px]" />
              <col />
            </colgroup>
            <thead>
              <tr className="h-[19px] text-[#4c607a]">
                <th className="border-r border-[#e5e5e5] p-0 pl-3 font-normal">Name</th>
                <th className="border-r border-[#e5e5e5] p-0 pl-1 font-normal">Date modified</th>
                <th className="border-r border-[#e5e5e5] p-0 pl-1 font-normal">Type</th>
                <th className="border-r border-[#e5e5e5] p-0 pl-1 font-normal">Size</th>
                <th className="p-0" />
              </tr>
            </thead>
            <tbody>
              <tr className="h-[21px] whitespace-nowrap text-[#6d6d6d]">
                <td className="p-0 pl-3 text-[#222]">
                  <span className="flex items-center gap-1">
                    <Ico n="csv" c="size-[11px]" />
                    Kenya_school_location.csv
                  </span>
                </td>
                <td className="p-0 pl-1">09-May-13 6:12 PM</td>
                <td className="p-0 pl-1">Microsoft Excel C...</td>
                <td className="p-0 pr-1 text-right">2 KB</td>
                <td className="p-0" />
              </tr>
            </tbody>
          </table>
        </div>
      </div>
      <div className="flex flex-1 flex-col bg-[#f0f0f0] pr-1">
        <div className="mt-2 flex h-4 items-center">
          <label htmlFor="fname" className="w-[89px] flex-none pr-1 text-right">
            File name:
          </label>
          <div className="flex h-4 flex-1 items-center border border-[#4f9fc4] bg-white px-[3px]">
            <input id="fname" defaultValue="Kenya_school_district" className="min-w-0 flex-1" />
            <Ico n="dn" c="size-[7px] text-[#666]" />
          </div>
        </div>
        <div className="mt-[2px] flex h-4 items-center">
          <label htmlFor="ftype" className="w-[89px] flex-none pr-1 text-right">
            Save as type:
          </label>
          <div className="flex h-4 flex-1 items-center border border-[#b0b0b0] bg-[#e2e2e2] px-[2px]">
            <select id="ftype" className="min-w-0 flex-1 appearance-none">
              <option>CSV files (*.csv)</option>
            </select>
            <Ico n="dn" c="size-[7px] text-[#666]" />
          </div>
        </div>
        <div className="mt-[15px] flex items-center pr-2">
          <button type="button" className="mr-auto flex items-center gap-[6px] pl-2">
            <Ico n="up" c="size-[7px]" /> Hide Folders
          </button>
          <button type="button" className="h-[17px] w-[62px] border-2 border-[#1a76c8] bg-[#e1e1e1]">
            Save
          </button>
          <button type="button" className="ml-[10px] h-[17px] w-[61px] border border-[#adadad] bg-[#e1e1e1]">
            Cancel
          </button>
        </div>
      </div>
    </div>
  );
}

const APPS: [string, string][] = [
  ["server", "Remote desktop"],
  ["explorer", "File Explorer"],
  ["chrome", "Chrome"],
  ["word", "Word"],
  ["qgis", "QGIS"],
];

function Taskbar({ time, excel }: { time: string; excel?: boolean }) {
  const apps = excel ? [...APPS, ["excel", "Excel"]] : APPS;
  return (
    <footer className="flex h-7 flex-none items-stretch bg-gradient-to-r from-[#333] from-60% via-[#2b2b2b] via-70% to-[#080808] to-77% font-['Open_Sans'] text-[9px] text-[#e6e6e6]">
      <IconButton n="win" label="Start" c="size-3" className="w-[35px]" />
      <IconButton n="cortana" label="Cortana" c="size-4" className="w-[28px]" />
      <input
        aria-label="Search Windows"
        placeholder="Type here to search"
        className="w-[190px] min-w-0 text-[10px] placeholder:text-[#a5a5a5]"
      />
      <IconButton n="mic" label="Microphone" c="size-3" className="w-6" />
      <IconButton n="tview" label="Task view" c="size-[13px]" className="w-[38px]" />
      {apps.map(([n, label], i) =>
        i === apps.length - 1 ? (
          <IconButton key={n} n={n} label={label} c="size-4" className="w-[34px] border-b-2 border-[#5fa3cf] bg-[#5c5c5c]" />
        ) : (
          <IconButton key={n} n={n} label={label} c="size-[17px]" className="mr-[3px] ml-1 w-[28px] border-b-2 border-[#5fa3cf]" />
        )
      )}
      <div className="ml-auto flex items-center gap-[7px]">
        <Ico n="up" c="size-[11px]" />
        <Ico n="sound" c="size-[11px]" />
        <Ico n="wifi" c="size-[9px]" />
        <Ico n={excel ? "plug" : "batt"} c="size-[11px]" />
        <span>ENG</span>
        <div className="w-[40px] text-center leading-[13px] whitespace-nowrap">
          <p>{time}</p>
          <p>19-Dec-18</p>
        </div>
        <div className="relative mr-2 flex w-5 justify-center">
          <Ico n="notif" c="size-[13px]" />
          <span className="absolute -right-[2px] -bottom-1 size-[10px] rounded-full border border-[#888] bg-[#333] text-center text-[8px] leading-[8px]">
            4
          </span>
        </div>
      </div>
      <span className="mr-[2px] border-l border-[#555]" />
    </footer>
  );
}

const MENUS = ["Project", "Edit", "View", "Layer", "Settings", "Plugins", "Vector", "Raster", "Database", "Web", "Processing", "Help"];

function QgisShot() {
  return (
    <div className="relative flex h-[548px] flex-col overflow-hidden bg-[#f0f0f0] font-['Open_Sans'] text-[8px] leading-[12px] text-[#111]">
      <header className="bg-white text-[#8c8c8c]">
        <div className="flex h-[17px] items-center gap-[6px] pr-3 pl-[2px]">
          <Ico n="qgis" c="size-3" />
          <span className="mr-auto">*Untitled Project - QGIS</span>
          <IconButton n="min" label="Minimise" c="size-2" />
          <IconButton n="rest" label="Restore" c="size-2" className="ml-[18px]" />
          <IconButton n="x" label="Close" c="size-[9px]" className="ml-[18px]" />
        </div>
        <nav className="flex h-[16px] items-center justify-between pr-[550px] pl-[6px]">
          {MENUS.map((m) => (
            <button key={m} type="button">
              {m}
            </button>
          ))}
        </nav>
      </header>
      <div className="flex h-[18px] flex-none border-b border-[#d0d0d0]">
        <ToolGroup className="w-[124px]" names={["new", "open", "save", "saveas", "layout", "layoutmgr", "style"]} />
        <ToolGroup
          className="w-[238px]"
          names={["hand", "panlayer", "zoomin", "zoomout", "zoom11", "zoomfull", "zoomsel", "zoomlayer", "zoomlast", "zoomnext", "mapview", "bookmarknew", "bookmark", "refresh"]}
        />
        <ToolGroup
          className="w-[248px] border-r-0"
          names={["identify", "gear", "v", "select", "v", "selform", "v", "desel", "attr", "calc", "cog", "sigma", "measure", "v", "tip", "annot", "v"]}
        />
      </div>
      <div className="flex h-[18px] flex-none">
        <ToolGroup className="w-[91px]" names={["dsm", "gpkg", "shp", "feathernew", "mem"]} />
        <ToolGroup
          className="w-[214px]"
          names={["edits", "pencil", "saveg", "pts", "vertex", "v", "modify", "trash", "cutg", "copyg", "copyg", "undog", "redog"]}
        />
        <ToolGroup className="w-[140px]" names={["abc", "diagram", "abc", "abcg", "abcg", "abcg", "abcg", "abcg"]} />
        <ToolGroup className="w-[25px]" names={["globe"]} />
        <ToolGroup className="w-[25px]" names={["python"]} />
        <ToolGroup className="w-[25px]" names={["help"]} />
      </div>
      <div className="mt-[2px] flex min-h-0 flex-1">
        <div className="flex w-[210px] flex-none flex-col">
          <BrowserPanel />
          <LayersPanel />
        </div>
        <div className="ml-[3px] flex-1 border border-[#9a9a9a] bg-white">
          <MapCanvas />
        </div>
        <ResultPanel />
      </div>
      <div className="flex h-[19px] flex-none items-center pr-[5px] pl-[3px]">
        <div className="flex h-[15px] w-[143px] items-center gap-[5px] border border-[#777] bg-white pl-[5px]">
          <Ico n="locate" c="size-[9px]" />
          <input aria-label="Type to locate" placeholder="Type to locate (Ctrl+K)" className="min-w-0 flex-1 placeholder:text-[#777]" />
        </div>
        <span className="pl-[5px]">Ready</span>
        <div className="ml-auto flex items-center gap-[6px] text-[#333]">
          <span>Coordinate</span>
          <span className="w-[48px] border border-[#999] bg-white">38.68, 4.66</span>
          <Ico n="gear" c="mr-2 size-[10px]" />
          <span>Scale</span>
          <span className="w-[54px] border border-[#999] bg-white">1:7351857</span>
          <span className="ml-1 size-2 rounded-t bg-[#666]" />
          <span>Magnifier</span>
          <span className="w-[56px] border border-[#999] bg-white">100%</span>
          <span>Rotation</span>
          <span className="w-[56px] border border-[#999] bg-white">0.0</span>
          <span className="size-[9px] border border-[#333] bg-white" />
          <span className="mr-3">Render</span>
          <Ico n="gear" c="size-[9px]" />
          <span className="mr-[6px]">EPSG:4326</span>
          <Ico n="chat" c="size-[11px]" />
        </div>
      </div>
      <Taskbar time="7:19 PM" />
      <div className="absolute top-[60px] right-[241px] left-[242px] h-[396px] border border-[#999] bg-[#f0f0f0] shadow-[0_0_8px_1px_rgba(0,0,0,0.3)]">
        <div className="flex h-[21px] items-center gap-[5px] bg-white pr-[6px] pl-[5px] text-[#8c8c8c]">
          <Ico n="qgis" c="size-[11px]" />
          <span className="mr-auto">Join Attributes by Location</span>
          <IconButton n="x" label="Close" c="size-2" />
        </div>
      </div>
      <SaveDialog />
    </div>
  );
}

/* ---------- Excel ---------- */

const ROWS: string[][] = [
  ["1163", "USULA", "0.0806", "34.3679", "SIAYA", "601", "SIAYA", "6"],
  ["1156", "MUR MALANGA", "0.00975", "34.26051", "SIAYA", "601", "SIAYA", "6"],
  ["1148", "SIAGE", "-0.1139", "34.3082", "BONDO", "602", "BONDO", "6"],
  ["1150", "KARUNGA", "-0.04272", "34.91285", "KISUMU", "604", "KISUMU EAST", "6"],
  ["1145", "ALWALA", "-0.13884", "34.48393", "KISUMU", "605", "KISUMU WEST", "6"],
  ["1230", "NATOLE", "3.51651", "35.87964", "TURKANA", "701", "TURKANA CENTRAL", "7"],
  ["1224", "KANGIRISAE", "2.61852", "36.25392", "TURKANA", "701", "TURKANA CENTRAL", "7"],
  ["1226", "LOCHOR EKUYEN", "2.86972", "35.17767", "TURKANA", "701", "TURKANA CENTRAL", "7"],
  ["1227", "NAOTIN", "3.0574", "35.54712", "TURKANA", "701", "TURKANA CENTRAL", "7"],
  ["1231", "MAKUTANO", "3.53587", "35.24499", "TURKANA", "701", "TURKANA CENTRAL", "7"],
  ["1233", "NARIOKOTOME", "4.14415", "35.91398", "TURKANA", "702", "TURKANA NORTH", "7"],
  ["1234", "AIC LOPIDING", "4.20626", "34.39046", "TURKANA", "702", "TURKANA NORTH", "7"],
  ["1225", "LOCHOR EMOIT", "2.75756", "35.64711", "TURKANA", "703", "TURKANA SOUTH", "7"],
  ["1219", "TURKWEL GORGE", "1.91918", "35.37047", "WEST POKOT", "704", "WEST POKOT", "7"],
  ["1222", "KAMERIS", "2.27526", "35.02739", "WEST POKOT", "705", "POKOT NORTH", "7"],
  ["1211", "CHORWAI", "1.13983", "35.31615", "WEST POKOT", "706", "POKOT CENTRAL", "7"],
  ["1204", "TOROR", "0.956572", "35.07867", "TRANS NZOIA", "710", "TRANS NZOIA WEST", "7"],
  ["1190", "TEREBEN", "0.52741", "35.75332", "BARINGO", "713", "BARINGO CENTRAL", "7"],
  ["1203", "NGINYANG B", "0.9392", "36.02051", "BARINGO", "715", "EAST POKOT", "7"],
  ["1169", "NGENDALEL", "0.141355", "36.11529", "KOIBATEK", "716", "KOIBATEK", "7"],
  ["1164", "KAPCHOLOI", "0.09255", "35.68682", "KOIBATEK", "716", "KOIBATEK", "7"],
  ["1193", "SONGETO", "0.5923", "35.55437", "KEIYO", "721", "KEIYO", "7"],
];
const HEAD = ["school_id", "school", "latitude", "longitude", "district", "LVLID", "ISO_CTRY", "STATECOD", "NAME", "LVL", "UPPERLVL", "UPPERLVLNA", "", "", "", "", ""];
const LETTERS = "ABCDEFGHIJKLMNOPQ".split("");
const NUMERIC = [0, 2, 3, 5, 9, 10];

function cellsOf(r: string[]): string[] {
  return [r[0], r[1], r[2], r[3], r[4], r[5], "KE", "KE", r[6], "2", r[7], r[7] === "6" ? "NYANZA" : "RIFT VALLEY", "", "", "", "", ""];
}

function Sheet() {
  return (
    <div className="flex h-[338px] flex-none overflow-hidden bg-[#e6e6e6]">
      <div className="min-w-0 flex-1 overflow-hidden border-b border-[#999]">
        <table className="h-[343px] w-full table-fixed border-separate border-spacing-0 bg-white font-[Lato] text-[9px] leading-[12px] whitespace-nowrap text-[#111]">
          <colgroup>
            <col className="w-[19px]" />
            <col className="w-[77px]" />
            <col className="w-[86px]" />
            <col className="w-[45px]" />
            <col className="w-[46px]" />
            <col className="w-[98px]" />
            <col className="w-[45px]" />
            <col className="w-[46px]" />
            <col className="w-[45px]" />
            <col className="w-[97px]" />
            <col className="w-[45px]" />
            <col className="w-[46px]" />
            <col className="w-[46px]" />
            <col className="w-[45px]" />
            <col className="w-[46px]" />
            <col className="w-[46px]" />
            <col className="w-[45px]" />
            <col className="w-[37px]" />
          </colgroup>
          <thead>
            <tr className="h-4 bg-[#e6e6e6] text-[#444]">
              <th className="border-r border-b border-[#bbb] p-0 pr-[2px]">
                <span className="ml-auto block size-0 border-b-8 border-l-8 border-b-[#b4b4b4] border-l-transparent" />
              </th>
              {LETTERS.map((l) => (
                <th
                  key={l}
                  className={
                    l === "E" || l === "I"
                      ? "border-b-2 border-[#217346] bg-[#d2efdf] p-0 font-normal text-[#3b7a58]"
                      : l === "Q"
                        ? "border-b border-[#bbb] p-0 pl-2 font-normal"
                        : "border-r border-b border-[#bbb] p-0 font-normal"
                  }
                >
                  {l}
                </th>
              ))}
            </tr>
          </thead>
          <tbody>
            {[HEAD, ...ROWS.map(cellsOf)].map((cells, r) => (
              <tr key={r}>
                <th className="border-r-2 border-b border-r-[#217346] border-b-[#bbb] bg-[#dcdcdc] p-0 text-center font-normal text-[#4c8464]">
                  {r + 1}
                </th>
                {cells.map((v, c) => {
                  const spill = c === 11 && (r === 0 || v === "RIFT VALLEY");
                  const sel = c === 4 || (c === 8 && r > 0);
                  const active = c === 8 && r === 0;
                  return (
                    <td
                      key={c}
                      className={`p-0 ${active ? "px-px" : "px-[2px]"} ${r > 0 && NUMERIC.includes(c) ? "text-right" : ""} ${
                        active
                          ? "border border-[#217346]"
                          : sel
                            ? "border-r border-b border-r-[#c5c5c5] border-b-[#b9b9b9] bg-[#c5c5c5]"
                            : spill
                              ? "border-b border-[#d4d4d4]"
                              : "border-r border-b border-[#d4d4d4]"
                      }`}
                    >
                      {v}
                    </td>
                  );
                })}
              </tr>
            ))}
          </tbody>
        </table>
      </div>
      <div className="flex w-[14px] flex-none flex-col items-center pt-[2px] text-[#666]">
        <span className="flex h-[11px] w-[11px] items-center justify-center border border-[#aaa] bg-white">
          <Ico n="up" c="size-[6px]" />
        </span>
        <span className="h-[165px] w-[11px] border border-[#aaa] bg-white" />
        <span className="w-[11px] flex-1 bg-[#d9d9d9]" />
        <span className="flex h-[11px] w-[11px] items-center justify-center border border-[#aaa] bg-white">
          <Ico n="caret" c="size-[5px]" />
        </span>
      </div>
    </div>
  );
}

function Group({ label, className, launcher, children }: { label: string; className: string; launcher?: boolean; children: React.ReactNode }) {
  return (
    <section className={`my-[2px] flex flex-col border-r border-[#c9c9c9] ${className}`}>
      <div className="flex flex-1 items-start">{children}</div>
      <div className="flex h-[12px] items-center justify-center pr-1">
        <span className="ml-auto">{label}</span>
        <span className="ml-auto flex">{launcher && <Ico n="launch" c="size-[6px]" />}</span>
      </div>
    </section>
  );
}

function Big({ icon, lines: [a, b], className }: { icon: string; lines: [string, string?]; className: string }) {
  return (
    <button type="button" className={`flex flex-none flex-col items-center pt-[2px] whitespace-nowrap ${className}`}>
      <Ico n={icon} c="mb-[3px] size-[21px]" />
      <span>{a}</span>
      <span className="flex items-center gap-[2px]">
        {b}
        <Ico n="caret" c="size-[5px] text-[#666]" />
      </span>
    </button>
  );
}

function Small({ icon, text, arrow }: { icon: string; text: string; arrow?: boolean }) {
  return (
    <button type="button" className="flex h-4 items-center gap-[3px] whitespace-nowrap">
      <Ico n={icon} c="size-[11px]" />
      {text}
      {arrow && <Ico n="caret" c="ml-[2px] size-[5px] text-[#666]" />}
    </button>
  );
}

const Arrow = () => <Ico n="caret" c="size-[5px] text-[#666]" />;
const Rule = () => <span className="h-3 border-l border-[#ccc]" />;

function Combo({ label, value, className }: { label: string; value: string; className: string }) {
  return (
    <div className={`flex h-4 flex-none items-center border border-[#c6c6c6] bg-white px-[2px] ${className}`}>
      <select aria-label={label} className="min-w-0 flex-1 appearance-none text-[#555]">
        <option>{value}</option>
      </select>
      <Arrow />
    </div>
  );
}

function Ribbon() {
  return (
    <div className="flex h-[67px] flex-none border-b border-[#d0d0d0] bg-[#f3f3f3] text-[#333]">
      <Group label="Clipboard" launcher className="w-[117px] flex-none">
        <Big icon="paste" lines={["Paste"]} className="w-[38px] pl-[4px]" />
        <div>
          <Small icon="scissors" text="Cut" />
          <Small icon="copy" text="Copy" arrow />
          <Small icon="painter" text="Format Painter" />
        </div>
      </Group>
      <Group label="Font" launcher className="w-[154px] flex-none">
        <div className="flex-1 pl-[6px]">
          <div className="mt-[5px] flex items-center">
            <Combo label="Font" value="Calibri" className="w-[79px]" />
            <Combo label="Font size" value="11" className="w-[31px]" />
            <IconButton n="growA" label="Grow font" c="size-[11px]" className="ml-1" />
            <IconButton n="shrinkA" label="Shrink font" c="size-[10px]" className="ml-[6px]" />
          </div>
          <div className="mt-[6px] flex h-4 items-center justify-between pr-3 pl-1">
            <button type="button" className="text-[9px] font-bold">B</button>
            <button type="button" className="font-['Liberation_Serif'] text-[9px] font-bold italic">I</button>
            <button type="button" className="text-[9px] underline">U</button>
            <Arrow />
            <Rule />
            <IconButton n="border" label="Borders" c="size-[10px]" />
            <Arrow />
            <Rule />
            <IconButton n="fill" label="Fill colour" c="size-[11px]" />
            <Arrow />
            <IconButton n="fontc" label="Font colour" c="size-[11px]" />
            <Arrow />
          </div>
        </div>
      </Group>
      <Group label="Alignment" launcher className="w-[192px] flex-none">
        <div className="w-[94px] flex-none pl-2">
          <div className="mt-[5px] flex h-4 items-center gap-[6px]">
            <IconButton n="atop" label="Top align" c="size-[10px]" />
            <IconButton n="amid" label="Middle align" c="size-[10px]" />
            <IconButton n="abot" label="Bottom align" c="size-[10px]" className="h-4 bg-[#c9c9c9] px-[2px]" />
            <IconButton n="orient" label="Orientation" c="size-[11px]" className="ml-1" />
            <Arrow />
          </div>
          <div className="mt-[6px] flex h-4 items-center gap-[6px]">
            <IconButton n="aleft" label="Align left" c="size-[10px]" />
            <IconButton n="acen" label="Centre" c="size-[10px]" />
            <IconButton n="aright" label="Align right" c="size-[10px]" />
            <IconButton n="outdent" label="Decrease indent" c="size-[11px]" className="ml-1" />
            <IconButton n="indent" label="Increase indent" c="size-[11px]" />
          </div>
        </div>
        <div className="border-l border-[#ddd] pl-1">
          <div className="mt-[5px]">
            <Small icon="wrap" text="Wrap Text" />
          </div>
          <div className="mt-[6px]">
            <Small icon="merge" text="Merge & Center" arrow />
          </div>
        </div>
      </Group>
      <Group label="Number" launcher className="w-[106px] flex-none">
        <div className="flex-1 px-[6px]">
          <div className="mt-[5px] flex">
            <Combo label="Number format" value="General" className="w-full" />
          </div>
          <div className="mt-[6px] flex h-4 items-center justify-between px-1 text-[10px]">
            <button type="button">$</button>
            <Arrow />
            <button type="button">%</button>
            <button type="button" className="font-bold">,</button>
            <Rule />
            <IconButton n="inc" label="Increase decimal" c="size-[11px]" />
            <IconButton n="dec" label="Decrease decimal" c="size-[11px]" />
          </div>
        </div>
      </Group>
      <Group label="Styles" className="w-[134px] flex-none">
        <Big icon="cond" lines={["Conditional", "Formatting"]} className="w-[62px]" />
        <Big icon="fmt" lines={["Format as", "Table"]} className="w-[36px]" />
        <Big icon="cellst" lines={["Cell", "Styles"]} className="w-[34px]" />
      </Group>
      <Group label="Cells" className="w-[102px] flex-none">
        <Big icon="ins" lines={["Insert"]} className="ml-[5px] w-[30px]" />
        <Big icon="del" lines={["Delete"]} className="w-[30px]" />
        <Big icon="form" lines={["Format"]} className="w-[30px]" />
      </Group>
      <Group label="Editing" className="w-[138px] flex-none">
        <div className="w-[69px] flex-none pl-[7px]">
          <Small icon="sum" text="AutoSum" arrow />
          <Small icon="filld" text="Fill" arrow />
          <Small icon="eraser" text="Clear" arrow />
        </div>
        <Big icon="sort" lines={["Sort &", "Filter"]} className="w-[32px]" />
        <Big icon="find" lines={["Find &", "Select"]} className="w-[32px]" />
      </Group>
      <div className="flex flex-1 items-end justify-center pb-1">
        <IconButton n="up" label="Collapse ribbon" c="size-[7px]" />
      </div>
    </div>
  );
}

function TitleArt() {
  return (
    <svg viewBox="0 0 352 38" className="absolute top-0 right-0 h-[38px] w-[352px]" aria-hidden="true">
      <g fill="none" stroke="#1a5c38" strokeWidth="2">
        <circle cx="4" cy="11" r="2.5" />
        <path d="M7 11h118M131 11h20l32 26" />
        <circle cx="128" cy="11" r="2.5" />
        <circle cx="18" cy="28" r="12" strokeWidth="3" />
        <path d="M14 34V23h10M14 23l10 11" strokeWidth="3" />
        <circle cx="50" cy="24" r="2.5" />
        <path d="M53 24h66l16 13M78 37l10-5h60" />
        <circle cx="152" cy="32" r="2.5" />
        <path d="M155 32h8l6 5" />
        <circle cx="199" cy="15" r="19" strokeWidth="4" />
        <path d="M192 24V10h14M192 10l14 14" strokeWidth="3" />
        <path d="M262 37l18-18h72M290 30L322 0M308 30L340 0" />
      </g>
    </svg>
  );
}

const TABS = ["Insert", "Page Layout", "Formulas", "Data", "Review", "View", "Help", "Team"];

function ExcelShot() {
  return (
    <div className="flex flex-col overflow-hidden bg-[#e6e6e6] font-['Open_Sans'] text-[8px] leading-[11px] text-[#222]">
      <header className="relative bg-[#217346] text-white">
        <TitleArt />
        <div className="relative grid h-[23px] grid-cols-3 items-center">
          <div className="flex items-center gap-[3px] pl-[15px]">
            <Ico n="xsave" c="mr-[6px] size-3" />
            <Ico n="xundo" c="size-[11px]" />
            <Ico n="caret" c="mr-[6px] size-[5px]" />
            <Ico n="xredo" c="size-[11px] text-[#4d9069]" />
            <Ico n="caret" c="size-[5px] text-[#4d9069]" />
            <Ico n="more" c="ml-2 size-[6px]" />
          </div>
          <p className="text-center whitespace-pre">Kenya_school_district.csv  [Read-Only]  -  Excel</p>
          <div className="flex items-center justify-end gap-6 pr-[11px]">
            <span className="mr-[-6px]">Parth Shah</span>
            <IconButton n="ribbon" label="Ribbon options" c="size-[10px]" />
            <IconButton n="min" label="Minimise" c="size-[8px]" />
            <IconButton n="rest" label="Restore" c="size-[9px]" />
            <IconButton n="x" label="Close" c="size-[9px]" />
          </div>
        </div>
        <nav className="relative flex h-[23px] items-center">
          <button type="button" className="w-11 pr-1">File</button>
          <button type="button" className="h-full w-[41px] bg-[#f3f3f3] text-[#217346]">Home</button>
          <div className="flex items-center gap-5 pl-[10px]">
            {TABS.map((t) => (
              <button key={t} type="button">
                {t}
              </button>
            ))}
          </div>
          <Ico n="bulb" c="ml-4 size-3" />
          <button type="button" className="ml-2">Tell me what you want to do</button>
          <button type="button" className="mr-4 ml-auto flex items-center gap-[2px]">
            <Ico n="person" c="size-3" />
            Share
          </button>
        </nav>
      </header>
      <Ribbon />
      <div className="flex h-[32px] flex-none items-center pr-[3px] pl-1 text-[#555]">
        <div className="flex h-[19px] w-[72px] items-center border border-[#c6c6c6] bg-white px-1">
          <input aria-label="Name box" defaultValue="I1" className="min-w-0 flex-1 text-[9px]" />
          <Ico n="caret" c="size-[6px]" />
        </div>
        <span className="mx-[10px] h-2 border-l-2 border-dotted border-[#aaa]" />
        <div className="flex h-[19px] w-[78px] items-center justify-around border border-[#c6c6c6] bg-white text-[#bbb]">
          <IconButton n="x" label="Cancel" c="size-2" />
          <IconButton n="check" label="Enter" c="size-[9px]" />
          <button type="button" className="font-['Liberation_Serif'] text-[10px] text-[#444] italic">
            fx
          </button>
        </div>
        <div className="ml-[2px] flex h-[19px] flex-1 items-center border border-[#c6c6c6] bg-white pr-1 pl-2">
          <input aria-label="Formula" defaultValue="NAME" className="min-w-0 flex-1 text-[9px]" />
          <Ico n="dn" c="size-[7px]" />
        </div>
      </div>
      <Sheet />
      <div className="flex h-5 flex-none items-center pr-[13px] pl-[17px] text-[#bbb]">
        <Ico n="tl" c="size-2" />
        <Ico n="tr" c="ml-3 size-2" />
        <button
          type="button"
          className="ml-[27px] h-[18px] w-[109px] self-start border-b-2 border-[#217346] bg-white text-[9px] font-bold text-[#217346]"
        >
          Kenya_school_district
        </button>
        <IconButton n="plusc" label="New sheet" c="size-3" className="ml-6" />
        <span className="mr-3 ml-auto h-2 border-l-2 border-dotted border-[#aaa]" />
        <div className="flex h-[11px] w-[364px] flex-none bg-[#d6d6d6] text-[#555]">
          <span className="flex w-[11px] items-center justify-center border border-[#aaa] bg-white">
            <Ico n="tl" c="size-[7px]" />
          </span>
          <span className="w-[320px] border border-[#aaa] bg-white" />
          <span className="ml-auto flex w-[11px] items-center justify-center border border-[#aaa] bg-white">
            <Ico n="tr" c="size-[7px]" />
          </span>
        </div>
      </div>
      <div className="flex h-4 flex-none items-center border-t border-[#d0d0d0] bg-[#f1f1f1] px-[5px] text-[#444]">
        <span className="mr-auto">Ready</span>
        <span className="text-[#666]">Count: 76</span>
        <IconButton n="vnormal" label="Normal view" c="size-[9px]" className="ml-3 h-full w-[27px] bg-[#c9c9c9]" />
        <IconButton n="vpage" label="Page layout view" c="size-[9px]" className="w-[28px]" />
        <IconButton n="vbreak" label="Page break view" c="size-[9px]" className="w-[26px]" />
        <button type="button" className="ml-1 font-bold">-</button>
        <input
          type="range"
          aria-label="Zoom"
          className="mx-1 h-px w-[70px] appearance-none bg-[#aaa] [&::-webkit-slider-thumb]:h-2 [&::-webkit-slider-thumb]:w-[3px] [&::-webkit-slider-thumb]:appearance-none [&::-webkit-slider-thumb]:bg-[#666]"
        />
        <button type="button" className="font-bold">+</button>
        <span className="ml-[7px] text-[#666]">100%</span>
      </div>
      <Taskbar time="7:35 PM" excel />
    </div>
  );
}

/* ---------- document page ---------- */

export default function App() {
  return (
    <div className="relative overflow-hidden bg-white pt-[53px] pb-[112px] font-['Liberation_Serif'] text-black">
      <div
        aria-hidden="true"
        className="absolute top-[1153px] left-[258px] origin-[0_282px] -rotate-45 text-[336px] leading-[336px] whitespace-nowrap text-[#dedede]"
      >
        WCCBM
      </div>
      <div className="relative mr-[54px] ml-[97px] border-[6px] border-[#4f81bd] p-[3px]">
        <div className="border-2 border-[#4f81bd] px-[14px]">
          <header className="mt-[9px] ml-[5px] flex h-[42px] items-end justify-between pr-[48px] pb-[3px]">
            <p className="text-[22px] leading-[34px] font-bold text-[#002060]">USIT6P4</p>
            <h1 className="text-[30px] leading-[40px] text-[#7030a0] italic">
              Principles of Geographic Information Systems Practical
            </h1>
          </header>
          <div className="-mr-px ml-[5px] h-[11px] bg-[#c0504d]" />

          <main className="pt-[14px] text-[25px] leading-[33px]">
            <div className="mr-[66px]">
              <QgisShot />
            </div>
            <p className="mt-[35px] font-bold">And then click run.</p>
            <p>After it is done…</p>
            <p className="-mr-2 mb-[2px]">
              Navigate to the location of saved file <b>Kenya_school_district.csv</b>and open it, you should now be able to
              compare both <b>district</b> and <b>Name</b> for discrepancies.
            </p>
            <div className="mr-[66px]">
              <ExcelShot />
            </div>
            <p className="mt-[2px] mr-[50px]">
              We need to change the co-ordinate of those 2 points which were not on the map. So, open the file{" "}
              <b>Kenya_school_location.csv</b> and make the following changes, set:
            </p>
            <p>IBWALI: Longitude 34.6459198</p>
            <p>SIWOT: Longitude 35.35437012</p>
          </main>

          <footer className="mt-[24px] -ml-[7px] flex pr-[13px]">
            <div className="min-w-0 flex-1">
              <div className="mt-[9px] mr-[5px] ml-[21px] h-[11px] bg-[#7030a0]" />
              <div className="mt-4 flex h-[34px] items-end justify-between leading-[34px] whitespace-nowrap">
                <p className="text-[25px]">T.Y.B.Sc.(IT) SEMESTER VI</p>
                <p className="text-[27px]">Western College of Commerce &amp; Business Management</p>
              </div>
            </div>
            <div className="w-[56px] flex-none border-t-[3px] border-[#9bbb59]">
              <p className="pt-1 pl-[2px] font-[Lato] text-[25px] leading-[34px]">171</p>
              <div className="h-[11px] bg-[#9bbb59]" />
            </div>
          </footer>
        </div>
      </div>
    </div>
  );
}
